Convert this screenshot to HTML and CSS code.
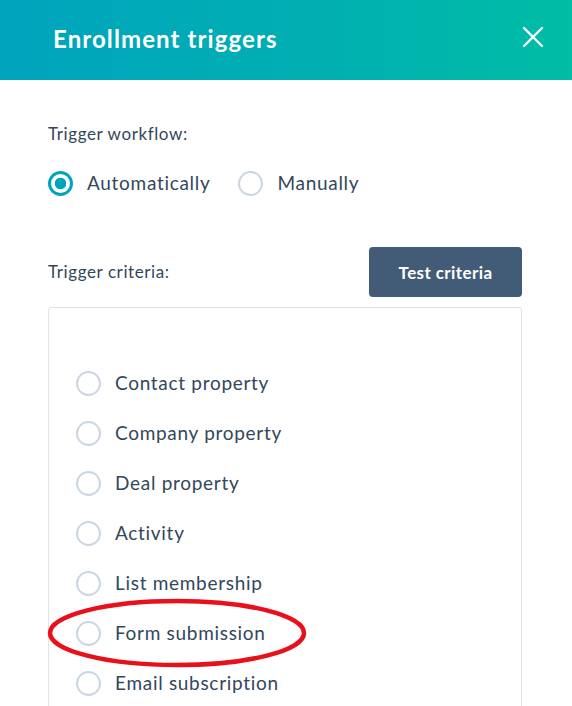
FILE: index.html
```html
<!DOCTYPE html>
<html lang="en">
<head>
<meta charset="utf-8">
<title>Enrollment triggers</title>
<link rel="stylesheet" href="styles.css">
</head>
<body>
<div class="panel">
  <header class="panel-header">
    <h1 class="panel-title">Enrollment triggers</h1>
    <button class="close-btn" aria-label="Close">
      <svg width="22" height="22" viewBox="0 0 22 22"><path d="M2 2 L20 20 M20 2 L2 20" stroke="#fff" stroke-width="2.4" stroke-linecap="round"/></svg>
    </button>
  </header>

  <main class="panel-body">
    <p class="label">Trigger workflow:</p>
    <div class="mode-row">
      <label class="radio">
        <span class="radio-dot checked"></span>
        <span class="radio-text">Automatically</span>
      </label>
      <label class="radio">
        <span class="radio-dot"></span>
        <span class="radio-text">Manually</span>
      </label>
    </div>

    <div class="criteria-head">
      <p class="label">Trigger criteria:</p>
      <button class="test-btn">Test criteria</button>
    </div>

    <div class="criteria-box">
      <ul class="filter-list">
        <li class="radio"><span class="radio-dot"></span><span class="radio-text">Contact property</span></li>
        <li class="radio"><span class="radio-dot"></span><span class="radio-text">Company property</span></li>
        <li class="radio"><span class="radio-dot"></span><span class="radio-text">Deal property</span></li>
        <li class="radio"><span class="radio-dot"></span><span class="radio-text">Activity</span></li>
        <li class="radio"><span class="radio-dot"></span><span class="radio-text">List membership</span></li>
        <li class="radio highlighted">
          <span class="radio-dot"></span><span class="radio-text">Form submission</span>
          <svg class="circle-mark" width="266" height="72" viewBox="0 0 266 72"><ellipse cx="133" cy="36" rx="127" ry="32" fill="none" stroke="#e8101a" stroke-width="4.5"/></svg>
        </li>
        <li class="radio"><span class="radio-dot"></span><span class="radio-text">Email subscription</span></li>
      </ul>
    </div>
  </main>
</div>
</body>
</html>
```

FILE: styles.css
```css
* { box-sizing: border-box; }

html, body {
  margin: 0;
  padding: 0;
  background: #fff;
}

body {
  font-family: Lato, "Open Sans", sans-serif;
  color: #33475b;
  overflow: hidden;
}

.panel {
  width: 572px;
  height: 706px;
  overflow: hidden;
}

.panel-header {
  height: 80px;
  display: flex;
  align-items: center;
  justify-content: space-between;
  padding: 0 28px 0 53px;
  background: linear-gradient(90deg, #00a4bd 0%, #00afb2 55%, #00bda5 100%);
}

.panel-title {
  margin: 0;
  padding-bottom: 4px;
  color: #fff;
  font-size: 24px;
  font-weight: 700;
  letter-spacing: 1.1px;
}

.close-btn {
  border: 0;
  background: none;
  padding: 0;
  width: 22px;
  height: 22px;
  margin-bottom: 6px;
  display: flex;
}

.panel-body {
  padding: 42px 50px 0 48px;
}

.label {
  margin: 0;
  font-size: 17px;
  line-height: 24px;
  letter-spacing: 0.6px;
}

.mode-row {
  display: flex;
  gap: 28px;
  margin-top: 24px;
}

.radio {
  display: flex;
  align-items: center;
  gap: 14px;
}

.radio-dot {
  width: 25px;
  height: 25px;
  flex: none;
  border-radius: 50%;
  border: 2px solid #cbd6e2;
  background: #fff;
}

.radio-dot.checked {
  border: 3px solid #00a4bd;
  background: radial-gradient(circle, #00a4bd 0 5.5px, #fff 6px);
}

.radio-text {
  font-size: 19px;
  line-height: 26px;
  letter-spacing: 0.7px;
  color: #33475b;
}

.criteria-head {
  display: flex;
  align-items: center;
  justify-content: space-between;
  margin-top: 51px;
}

.test-btn {
  width: 153px;
  height: 50px;
  border: 0;
  border-radius: 4px;
  background: #425b76;
  color: #fff;
  font-family: inherit;
  font-size: 17px;
  font-weight: 700;
  letter-spacing: 0.4px;
}

.criteria-box {
  margin-top: 10px;
  border: 1px solid #dfe3eb;
  border-radius: 3px;
  height: 500px;
  padding: 62px 27px 0 27px;
}

.filter-list {
  list-style: none;
  margin: 0;
  padding: 0;
  display: flex;
  flex-direction: column;
  gap: 24px;
}

.highlighted {
  position: relative;
}

.circle-mark {
  position: absolute;
  left: -32px;
  top: -23px;
  pointer-events: none;
}
```
